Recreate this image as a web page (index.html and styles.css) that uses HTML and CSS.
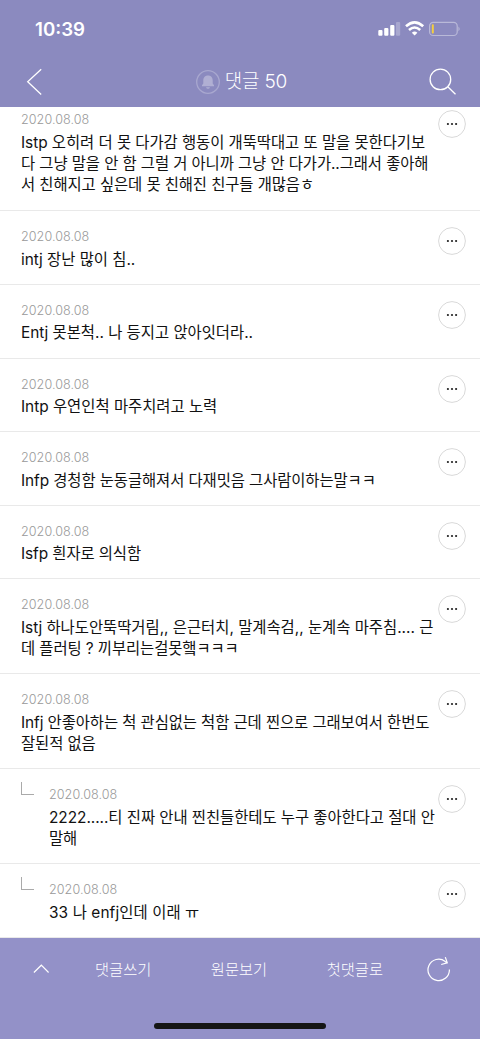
FILE: index.html
```html
<!DOCTYPE html>
<html lang="ko">
<head>
<meta charset="utf-8">
<title>댓글 50</title>
<link rel="stylesheet" href="styles.css">
</head>
<body>
<svg class="defs" width="0" height="0"><defs><symbol id="dots" viewBox="0 0 28 28"><circle cx="14" cy="14" r="13.4" fill="none" stroke="#d9d9d9" stroke-width="1"/><circle cx="9.9" cy="14" r="1.1"/><circle cx="14" cy="14" r="1.1"/><circle cx="18.1" cy="14" r="1.1"/></symbol></defs></svg>
<div class="app">
  <header class="header">
    <div class="status">
      <span class="time">10:39</span>
      <svg class="signals" width="84" height="18" viewBox="0 0 84 18" fill="#fff">
        <rect x="1.300" y="10" width="4.200" height="5.700" rx="1"/><rect x="7.200" y="8" width="4.200" height="7.700" rx="1"/><rect x="13.200" y="5" width="4.200" height="10.700" rx="1"/><rect x="19" y="2" width="4.200" height="13.700" rx="1" opacity=".25"/>
        <g fill="none" stroke="#fff" stroke-width="2.600"><path d="M29 6.300Q37.600 -1.500 46.200 6.300"/><path d="M32 10Q37.600 5 43.200 10"/></g><path d="M34.800 12.800Q37.600 10.400 40.400 12.800L37.600 15.600Z"/>
        <rect x="52.600" y="2.300" width="27.600" height="13.200" rx="3.600" fill="none" stroke="#fff" stroke-opacity=".4" stroke-width="1.200"/><rect x="54.800" y="4.300" width="2" height="9.200" rx=".8" fill="#f5cf3f"/><path d="M81.500 6.600Q83.700 9 81.500 11.300Z" opacity=".45"/>
      </svg>
    </div>
    <div class="nav">
      <svg class="back" width="16" height="28" viewBox="0 0 16 28"><path d="M15.200 1.200L1.700 13.800L15.200 26.400"/></svg>
      <div class="title">
        <svg width="24" height="24" viewBox="0 0 24 24"><circle cx="12" cy="12" r="11.300" fill="none" stroke="#fff" stroke-opacity=".25"/><path d="M12 5.500C8.800 5.500 7.300 7.800 7.300 10.500V13.500L6 15.200V16.200H18V15.200L16.700 13.500V10.500C16.700 7.800 15.200 5.500 12 5.500ZM10 17.200H14Q13.500 18.700 12 18.700T10 17.200Z" fill="#fff" fill-opacity=".32"/></svg>
        <h1>댓글 50</h1>
      </div>
      <svg class="search" width="28" height="28" viewBox="0 0 28 28"><circle cx="11.400" cy="11.400" r="10.300"/><path d="M18.800 18.800L26.500 26.200"/></svg>
    </div>
  </header>
  <main class="list">
    <article class="row first"><time>2020.08.08</time><p><span class="wide">Istp 오히려 더 못 다가감 행동이 개뚝딱대고 또 말을 못한다기보</span><span>다 그냥 말을 안 함 그럴 거 아니까 그냥 안 다가가..그래서 좋아해</span><span>서 친해지고 싶은데 못 친해진 친구들 개많음ㅎ</span></p><svg class="more"><use href="#dots"/></svg></article>
    <article class="row"><time>2020.08.08</time><p><span class="wider">intj 장난 많이 침..</span></p><svg class="more"><use href="#dots"/></svg></article>
    <article class="row"><time>2020.08.08</time><p><span class="wider">Entj 못본척.. 나 등지고 앉아잇더라..</span></p><svg class="more"><use href="#dots"/></svg></article>
    <article class="row"><time>2020.08.08</time><p><span class="wider">Intp 우연인척 마주치려고 노력</span></p><svg class="more"><use href="#dots"/></svg></article>
    <article class="row"><time>2020.08.08</time><p><span>Infp 경청함 눈동글해져서 다재밋음 그사람이하는말ㅋㅋ</span></p><svg class="more"><use href="#dots"/></svg></article>
    <article class="row"><time>2020.08.08</time><p><span>Isfp 흰자로 의식함</span></p><svg class="more"><use href="#dots"/></svg></article>
    <article class="row"><time>2020.08.08</time><p><span class="wider">Istj 하나도안뚝딱거림,, 은근터치, 말계속검,, 눈계속 마주침.... 근</span><span>데 플러팅 ? 끼부리는걸못햌ㅋㅋㅋ</span></p><svg class="more"><use href="#dots"/></svg></article>
    <article class="row"><time>2020.08.08</time><p><span>Infj 안좋아하는 척 관심없는 척함 근데 찐으로 그래보여서 한번도</span><span>잘된적 없음</span></p><svg class="more"><use href="#dots"/></svg></article>
    <article class="row reply"><time>2020.08.08</time><p><span class="wide">2222.....티 진짜 안내 찐친들한테도 누구 좋아한다고 절대 안</span><span>말해</span></p><svg class="more"><use href="#dots"/></svg></article>
    <article class="row reply"><time>2020.08.08</time><p><span class="widest">33 나 enfj인데 이래 ㅠ</span></p><svg class="more"><use href="#dots"/></svg></article>
  </main>
  <footer class="footer">
    <nav class="actions">
      <svg width="16" height="10" viewBox="0 0 16 10"><path d="M.9 8.500L8.300 1.200L15.600 8.500"/></svg>
      <div class="links"><span>댓글쓰기</span><span>원문보기</span><span>첫댓글로</span></div>
      <svg width="24" height="26" viewBox="0 0 24 26"><path d="M22.400 13.500A10.700 10.700 0 1 1 18.200 5.400L20.300 6.900M18.300 1.100L20.300 6.900L14.200 8.500"/></svg>
    </nav>
    <div class="home"></div>
  </footer>
</div>
</body>
</html>
```
FILE: styles.css
```css
* { box-sizing: border-box; }
body { margin: 0; background: #fff; color: #111; font-family: Inter, "Noto Sans CJK KR", sans-serif; }
.defs { position: absolute; }
.app { width: 480px; height: 1039px; display: flex; flex-direction: column; overflow: hidden; }
.header { height: 107px; flex: none; background: #8b8abf; color: #fff; }
.status { height: 57px; padding: 20px 19px 0 35px; display: flex; justify-content: space-between; }
.time { font-size: 18.700px; line-height: 19px; font-weight: 600; }
.nav { height: 49px; padding: 0 23px 0 26px; display: flex; align-items: center; justify-content: space-between; }
.nav svg { fill: none; stroke: #fff; stroke-width: 1.300; }
.title svg { stroke: none; }
.title { display: flex; align-items: center; gap: 5px; padding-left: 12px; }
h1 { margin: 0; font-size: 19px; line-height: 26px; font-weight: 300; letter-spacing: -.2px; }
.list { height: 831px; flex: none; overflow: hidden; }
.row { position: relative; height: 73.670px; padding: 17px 0 14.330px 21px; border-bottom: 1px solid #e9e9e9; }
.row:has(p span + span) { height: 95px; }
.row.first:has(p span + span) { height: 104.200px; padding-top: 4.300px; }
time { display: block; height: 17px; margin-bottom: 3.400px; color: #999; font-size: 12.600px; line-height: 17px; font-weight: 300; letter-spacing: .05px; }
p { margin: 0; font-size: 15.400px; line-height: 21.330px; letter-spacing: -.08px; }
p span { display: block; width: max-content; height: 21.330px; white-space: nowrap; }
.wide { letter-spacing: -.04px; }
.wider { letter-spacing: -.01px; }
.widest { letter-spacing: .1px; }
.more { position: absolute; right: 14px; top: 16px; width: 28px; height: 28px; fill: #222; }
.first .more { top: 3px; }
.reply { padding-left: 49px; }
.reply::before { content: ""; position: absolute; left: 21px; top: 13px; width: 12px; height: 12px; border: solid #aaa; border-width: 0 0 1px 1px; }
.footer { flex: 1; background: #9391c8; color: #fff; display: flex; flex-direction: column; align-items: center; justify-content: space-between; padding-bottom: 10px; }
.actions { width: 480px; height: 61px; padding: 0 29px 0 33px; display: flex; align-items: center; justify-content: space-between; font-size: 15.300px; font-weight: 300; }
.links { width: 288px; display: flex; justify-content: space-between; transform: translateY(-1px); margin-left: 2px; }
.actions svg { fill: none; stroke: #fff; stroke-width: 1.200; }
.home { width: 172px; height: 6px; border-radius: 3px; background: #151515; }
```
